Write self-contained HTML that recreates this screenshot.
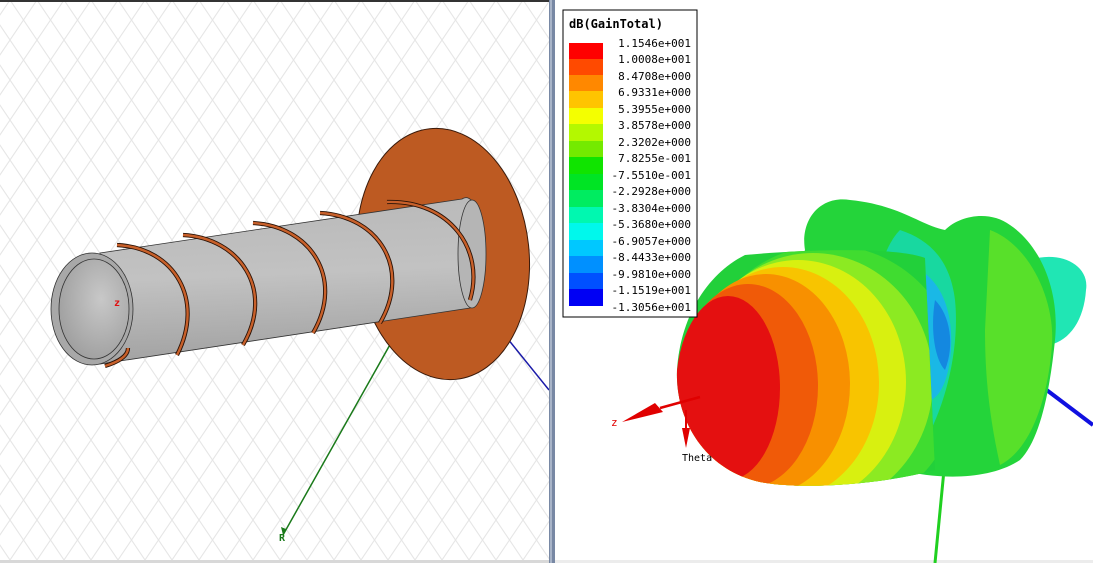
<!DOCTYPE html>
<html><head><meta charset="utf-8"><style>
html,body{margin:0;padding:0;background:#fff;overflow:hidden}
svg{display:block}
text{font-family:"DejaVu Sans Mono","Liberation Mono",monospace}
</style></head><body>
<svg width="1093" height="563" viewBox="0 0 1093 563" xmlns="http://www.w3.org/2000/svg">
<defs>
<pattern id="grid" width="27" height="40" patternUnits="userSpaceOnUse" x="10" y="0">
<path d="M0 0 L27 40 M27 0 L0 40" stroke="#e6e6e6" stroke-width="1.1" fill="none"/>
</pattern>
<linearGradient id="cyl" x1="0" y1="0" x2="0.1" y2="1">
<stop offset="0" stop-color="#b8b8b8"/><stop offset="0.5" stop-color="#c2c2c2"/><stop offset="1" stop-color="#a2a2a2"/>
</linearGradient>
<radialGradient id="inner" cx="0.6" cy="0.4" r="0.7">
<stop offset="0" stop-color="#c8c8c8"/><stop offset="1" stop-color="#9c9c9c"/>
</radialGradient>
<clipPath id="cone">
<path d="M745 255 C820 248 900 248 925 258 L935 470 C880 485 800 490 760 482 C705 470 675 420 677 370 C680 320 705 275 745 255 Z"/>
</clipPath>
</defs>
<rect x="0" y="0" width="549" height="563" fill="#fff"/>
<rect x="0" y="0" width="549" height="563" fill="url(#grid)"/>
<rect x="0" y="0" width="549" height="2" fill="#333"/>
<rect x="0" y="560" width="549" height="3" fill="#d8d8d8"/>
<line x1="470" y1="292" x2="549" y2="390" stroke="#1a1aa8" stroke-width="1.5"/>
<line x1="405" y1="318" x2="283" y2="535" stroke="#1a7a1a" stroke-width="1.5"/>
<path d="M283 535 l-2 -8 l5 2z" fill="#1a7a1a"/>
<text x="279" y="541" font-size="10" fill="#1a7a1a" font-weight="bold">R</text>
<ellipse cx="443" cy="254" rx="86" ry="126" transform="rotate(-6 443 254)" fill="#bd5a22" stroke="#3a1a0a" stroke-width="1"/>
<path d="M100 253 L462 199 A18 55 0 0 1 470 308 L100 364 Z" fill="url(#cyl)" stroke="#333" stroke-width="0.8"/>
<ellipse cx="472" cy="254" rx="14" ry="54" fill="#b5b5b5" stroke="#333" stroke-width="0.8"/>
<g fill="none" stroke="#2a1206" stroke-width="4.2">
<path d="M117 245 C175 248 205 300 177 355"/>
<path d="M183 235 C240 238 275 290 243 345"/>
<path d="M253 223 C310 226 345 278 313 333"/>
<path d="M320 213 C378 216 412 268 380 323"/>
<path d="M387 202 C450 200 485 250 470 300"/>
<path d="M105 366 C118 362 128 356 128 348"/>
</g>
<g fill="none" stroke="#c8602a" stroke-width="2.4">
<path d="M117 245 C175 248 205 300 177 355"/>
<path d="M183 235 C240 238 275 290 243 345"/>
<path d="M253 223 C310 226 345 278 313 333"/>
<path d="M320 213 C378 216 412 268 380 323"/>
<path d="M387 202 C450 200 485 250 470 300"/>
<path d="M105 366 C118 362 128 356 128 348"/>
</g>
<ellipse cx="92" cy="309" rx="41" ry="56" fill="#a8a8a8" stroke="#333" stroke-width="0.8"/>
<ellipse cx="94" cy="309" rx="35" ry="50" fill="url(#inner)" stroke="#333" stroke-width="0.8"/>
<text x="114" y="306" font-size="10" fill="#e01010" font-weight="bold">z</text>
<rect x="549" y="0" width="6" height="563" fill="#7888a4"/>
<rect x="550" y="0" width="2" height="563" fill="#a8b4c8"/>
<rect x="555" y="0" width="538" height="563" fill="#fff"/>
<rect x="555" y="560" width="538" height="3" fill="#ececec"/>
<line x1="1040" y1="385" x2="1093" y2="425" stroke="#1010e0" stroke-width="4"/>
<line x1="944" y1="470" x2="935" y2="563" stroke="#20d020" stroke-width="3"/>
<path d="M1030 260 C1060 250 1090 265 1086 290 C1084 320 1070 340 1050 345 Z" fill="#20e6b4"/>
<path d="M805 250 C800 220 820 195 850 200 C900 205 920 225 945 230 C960 215 990 210 1010 225 C1040 245 1060 290 1055 340 C1050 390 1040 440 1020 460 C990 480 940 480 900 470 C870 460 860 440 850 420 L780 300 Z" fill="#24d43a"/>
<path d="M990 230 C1030 245 1055 300 1052 345 C1048 400 1030 450 1000 465 C990 420 985 380 985 330 Z" fill="#58e02a"/>
<path d="M900 230 C930 240 950 260 955 300 C960 350 945 410 920 450 C890 440 870 400 870 350 C870 300 880 250 900 230 Z" fill="#18d8a0"/>
<path d="M920 270 C945 285 955 320 950 360 C945 395 930 410 915 395 C905 360 905 310 920 270 Z" fill="#1ab8e6"/>
<path d="M935 300 C950 315 955 345 945 370 C935 360 930 330 935 300 Z" fill="#1488e0"/>
<g clip-path="url(#cone)">
<rect x="670" y="240" width="270" height="260" fill="#22d03a"/>
<ellipse cx="828" cy="380" rx="132" ry="135" fill="#40dc30"/>
<ellipse cx="813" cy="381" rx="120" ry="128" fill="#8cea22"/>
<ellipse cx="798" cy="382" rx="108" ry="122" fill="#d8f010"/>
<ellipse cx="783" cy="383" rx="96" ry="116" fill="#f8c400"/>
<ellipse cx="766" cy="384" rx="84" ry="110" fill="#f89000"/>
<ellipse cx="748" cy="386" rx="70" ry="102" fill="#f05a08"/>
<ellipse cx="728" cy="388" rx="52" ry="92" fill="#e41010"/>
</g>
<line x1="700" y1="397" x2="660" y2="408" stroke="#e00000" stroke-width="2.5"/>
<path d="M622 422 L655 403 L663 412 Z" fill="#e00000"/>
<text x="611" y="426" font-size="11" fill="#e00000">z</text>
<line x1="686" y1="410" x2="686" y2="430" stroke="#e00000" stroke-width="2"/>
<path d="M682 428 L690 428 L686 448 Z" fill="#e00000"/>
<text x="682" y="461" font-size="10" fill="#000">Theta</text>
<rect x="563" y="10" width="134" height="307" fill="#fff" stroke="#000" stroke-width="1"/>
<text x="569" y="28" font-size="12" font-weight="bold" fill="#000">dB(GainTotal)</text>
<g>
<rect x="569" y="43" width="34" height="17" fill="#ff0000"/>
<rect x="569" y="59" width="34" height="17" fill="#ff4a00"/>
<rect x="569" y="75" width="34" height="17" fill="#ff8800"/>
<rect x="569" y="91" width="34" height="17" fill="#ffc400"/>
<rect x="569" y="108" width="34" height="17" fill="#f4ff00"/>
<rect x="569" y="124" width="34" height="17" fill="#b4f800"/>
<rect x="569" y="141" width="34" height="17" fill="#74ea00"/>
<rect x="569" y="157" width="34" height="17" fill="#10e400"/>
<rect x="569" y="174" width="34" height="17" fill="#00e424"/>
<rect x="569" y="190" width="34" height="17" fill="#00ec60"/>
<rect x="569" y="207" width="34" height="17" fill="#00f8b0"/>
<rect x="569" y="223" width="34" height="17" fill="#00f8ec"/>
<rect x="569" y="240" width="34" height="17" fill="#00c8ff"/>
<rect x="569" y="256" width="34" height="17" fill="#0090ff"/>
<rect x="569" y="273" width="34" height="17" fill="#0050ff"/>
<rect x="569" y="289" width="34" height="17" fill="#0000f4"/>
</g>
<g font-size="11" fill="#000" text-anchor="end">
<text x="691" y="47">1.1546e+001</text>
<text x="691" y="63">1.0008e+001</text>
<text x="691" y="80">8.4708e+000</text>
<text x="691" y="96">6.9331e+000</text>
<text x="691" y="113">5.3955e+000</text>
<text x="691" y="129">3.8578e+000</text>
<text x="691" y="146">2.3202e+000</text>
<text x="691" y="162">7.8255e-001</text>
<text x="691" y="179">-7.5510e-001</text>
<text x="691" y="195">-2.2928e+000</text>
<text x="691" y="212">-3.8304e+000</text>
<text x="691" y="228">-5.3680e+000</text>
<text x="691" y="245">-6.9057e+000</text>
<text x="691" y="261">-8.4433e+000</text>
<text x="691" y="278">-9.9810e+000</text>
<text x="691" y="294">-1.1519e+001</text>
<text x="691" y="311">-1.3056e+001</text>
</g>
</svg>
</body></html>
